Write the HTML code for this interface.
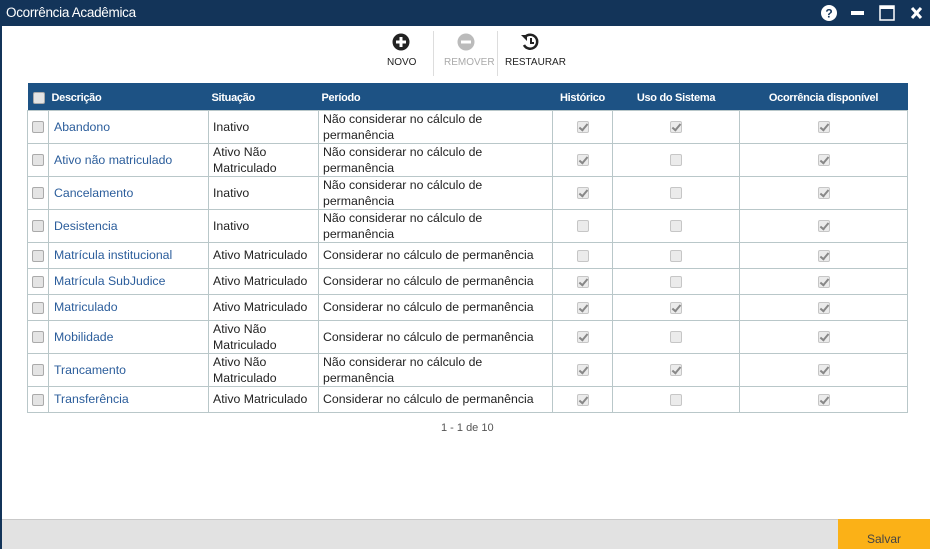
<!DOCTYPE html>
<html><head><meta charset="utf-8"><style>
*{box-sizing:border-box;margin:0;padding:0}
body{width:930px;height:549px;overflow:hidden;background:#fff;font-family:"Liberation Sans",sans-serif;position:relative}
.title{position:absolute;left:0;top:0;width:930px;height:26px;background:#133459;color:#fff;font-size:13.5px;line-height:25px;padding-left:6px;letter-spacing:-0.3px}
.lb{position:absolute;left:0;top:26px;width:2px;height:523px;background:#133459}
.ic{position:absolute;top:0}
.tb{position:absolute;top:30px;font-size:10px;color:#222;text-align:center}
.sep{position:absolute;top:31px;width:1px;height:45px;background:#ddd}
table{position:absolute;left:27px;top:83px;border-collapse:collapse;width:880px;table-layout:fixed}
th{background:#1d5284;color:#fff;font-size:11px;font-weight:bold;height:27px;text-align:left;letter-spacing:-0.3px;padding-left:3px;padding-top:3px}
td{border:1px solid #b9c7c9;font-size:12.3px;color:#222;padding:0 4px;line-height:16px}
td.d{color:#2b5d9b;padding-left:5px}
td.c{text-align:center;padding:0}
.cb{display:inline-block;width:12px;height:12px;border:1px solid #c6c6c6;border-radius:2px;background:#ebebeb;vertical-align:middle;position:relative}
.cb.k::after{content:"";position:absolute;left:3px;top:0px;width:3px;height:7px;border:solid #888;border-width:0 2px 2px 0;transform:rotate(40deg)}
.lc{display:inline-block;width:12px;height:12px;border:1px solid #aaa;border-radius:2px;background:#e4e4e4;vertical-align:middle}
.foot{position:absolute;left:2px;top:519px;width:928px;height:30px;background:#e2e2e2;border-top:1px solid #c9c9c9}
.save{position:absolute;left:838px;top:519px;width:92px;height:30px;background:#fbb117;color:#444;font-size:12px;text-align:center;line-height:40px}
</style></head><body>
<div class="title">Ocorrência Acadêmica</div>
<svg class="ic" style="left:820px" width="110" height="26">
<circle cx="9" cy="13" r="8" fill="#fff"/><text x="9" y="17.5" font-size="12" font-weight="bold" fill="#133459" text-anchor="middle" font-family="Liberation Sans">?</text>
<rect x="31" y="11" width="13" height="4" fill="#fff"/>
<rect x="60" y="6" width="14" height="14" fill="none" stroke="#fff" stroke-width="1.5"/><rect x="60" y="6" width="14" height="3" fill="#fff"/>
<path d="M92 8 L101 18 M101 8 L92 18" stroke="#fff" stroke-width="3"/>
</svg>
<div class="lb"></div>
<svg class="ic" style="left:392px;top:33px" width="18" height="18"><circle cx="9" cy="9" r="8.5" fill="#222"/><path d="M9 4v10M4 9h10" stroke="#fff" stroke-width="3"/></svg>
<div class="tb" style="left:387px;top:57px">NOVO</div>
<div class="sep" style="left:433px"></div>
<svg class="ic" style="left:457px;top:33px" width="18" height="18"><circle cx="9" cy="9" r="8.5" fill="#bbb"/><path d="M4 9h10" stroke="#fff" stroke-width="3"/></svg>
<div class="tb" style="left:444px;top:57px;color:#aaa">REMOVER</div>
<div class="sep" style="left:497px"></div>
<svg class="ic" style="left:520px;top:33px" width="20" height="18"><path d="M5 4 A7 7 0 1 1 4 12" fill="none" stroke="#222" stroke-width="2.5"/><path d="M1 2 L7 2 L7 8Z" fill="#222"/><path d="M11 5v5h3" fill="none" stroke="#222" stroke-width="2"/></svg>
<div class="tb" style="left:505px;top:57px">RESTAURAR</div>
<table>
<colgroup><col style="width:21px"><col style="width:160px"><col style="width:110px"><col style="width:234px"><col style="width:60px"><col style="width:127px"><col style="width:168px"></colgroup>
<tr><th style="padding-left:5px"><span class="lc"></span></th><th>Descrição</th><th>Situação</th><th>Período</th><th style="text-align:center;padding:3px 0 0">Histórico</th><th style="text-align:center;padding:3px 0 0">Uso do Sistema</th><th style="text-align:center;padding:3px 0 0">Ocorrência disponível</th></tr>
<tr style="height:33px"><td class="c"><span class="lc"></span></td><td class="d">Abandono</td><td>Inativo</td><td>Não considerar no cálculo de permanência</td><td class="c"><span class="cb k"></span></td><td class="c"><span class="cb k"></span></td><td class="c"><span class="cb k"></span></td></tr>
<tr style="height:33px"><td class="c"><span class="lc"></span></td><td class="d">Ativo não matriculado</td><td>Ativo Não Matriculado</td><td>Não considerar no cálculo de permanência</td><td class="c"><span class="cb k"></span></td><td class="c"><span class="cb"></span></td><td class="c"><span class="cb k"></span></td></tr>
<tr style="height:33px"><td class="c"><span class="lc"></span></td><td class="d">Cancelamento</td><td>Inativo</td><td>Não considerar no cálculo de permanência</td><td class="c"><span class="cb k"></span></td><td class="c"><span class="cb"></span></td><td class="c"><span class="cb k"></span></td></tr>
<tr style="height:33px"><td class="c"><span class="lc"></span></td><td class="d">Desistencia</td><td>Inativo</td><td>Não considerar no cálculo de permanência</td><td class="c"><span class="cb"></span></td><td class="c"><span class="cb"></span></td><td class="c"><span class="cb k"></span></td></tr>
<tr style="height:26px"><td class="c"><span class="lc"></span></td><td class="d">Matrícula institucional</td><td>Ativo Matriculado</td><td>Considerar no cálculo de permanência</td><td class="c"><span class="cb"></span></td><td class="c"><span class="cb"></span></td><td class="c"><span class="cb k"></span></td></tr>
<tr style="height:26px"><td class="c"><span class="lc"></span></td><td class="d">Matrícula SubJudice</td><td>Ativo Matriculado</td><td>Considerar no cálculo de permanência</td><td class="c"><span class="cb k"></span></td><td class="c"><span class="cb"></span></td><td class="c"><span class="cb k"></span></td></tr>
<tr style="height:26px"><td class="c"><span class="lc"></span></td><td class="d">Matriculado</td><td>Ativo Matriculado</td><td>Considerar no cálculo de permanência</td><td class="c"><span class="cb k"></span></td><td class="c"><span class="cb k"></span></td><td class="c"><span class="cb k"></span></td></tr>
<tr style="height:33px"><td class="c"><span class="lc"></span></td><td class="d">Mobilidade</td><td>Ativo Não Matriculado</td><td>Considerar no cálculo de permanência</td><td class="c"><span class="cb k"></span></td><td class="c"><span class="cb"></span></td><td class="c"><span class="cb k"></span></td></tr>
<tr style="height:33px"><td class="c"><span class="lc"></span></td><td class="d">Trancamento</td><td>Ativo Não Matriculado</td><td>Não considerar no cálculo de permanência</td><td class="c"><span class="cb k"></span></td><td class="c"><span class="cb k"></span></td><td class="c"><span class="cb k"></span></td></tr>
<tr style="height:26px"><td class="c"><span class="lc"></span></td><td class="d">Transferência</td><td>Ativo Matriculado</td><td>Considerar no cálculo de permanência</td><td class="c"><span class="cb k"></span></td><td class="c"><span class="cb"></span></td><td class="c"><span class="cb k"></span></td></tr>
</table>
<div style="position:absolute;left:441px;top:422px;font-size:11px;color:#555">1 - 1 de 10</div>
<div class="foot"></div>
<div class="save">Salvar</div>
</body></html>
